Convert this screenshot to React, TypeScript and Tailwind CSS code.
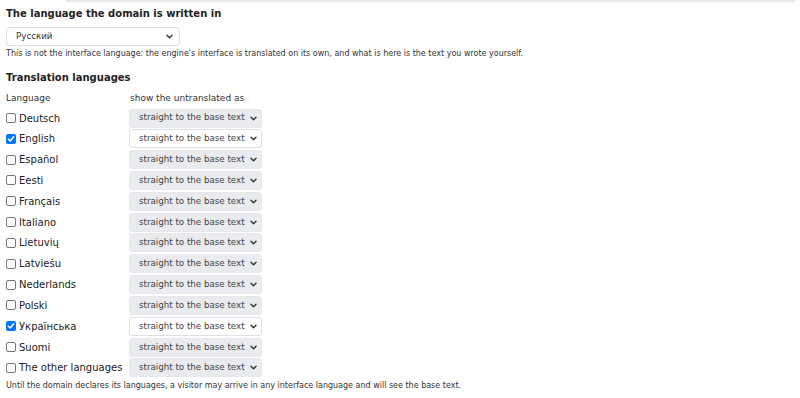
import React from "react";

const langs: { name: string; on: boolean }[] = [
  { name: "Deutsch", on: false },
  { name: "English", on: true },
  { name: "Español", on: false },
  { name: "Eesti", on: false },
  { name: "Français", on: false },
  { name: "Italiano", on: false },
  { name: "Lietuvių", on: false },
  { name: "Latviešu", on: false },
  { name: "Nederlands", on: false },
  { name: "Polski", on: false },
  { name: "Українська", on: true },
  { name: "Suomi", on: false },
  { name: "The other languages", on: false },
];

function Chevron() {
  return (
    <svg width="7" height="5" viewBox="0 0 7 5" className="shrink-0">
      <path d="M1 1.2 L3.5 3.7 L6 1.2" fill="none" stroke="#333" strokeWidth="1.4" strokeLinecap="round" strokeLinejoin="round" />
    </svg>
  );
}

function Box({ on }: { on: boolean }) {
  if (on) {
    return (
      <span className="w-[10px] h-[10px] rounded-[2px] bg-[#0075ff] flex items-center justify-center shrink-0">
        <svg width="8" height="8" viewBox="0 0 8 8">
          <path d="M1.4 4.2 L3.2 6 L6.7 1.8" fill="none" stroke="#fff" strokeWidth="1.5" strokeLinecap="round" strokeLinejoin="round" />
        </svg>
      </span>
    );
  }
  return <span className="w-[10px] h-[10px] rounded-[2px] border border-[#767676] bg-white shrink-0" />;
}

export default function App() {
  return (
    <div className="w-[800px] h-[398px] bg-white overflow-hidden text-[#222]" style={{ fontFamily: '"DejaVu Sans", Verdana, sans-serif' }}>
      <div className="h-[2px] ml-[66px] mr-[5px] bg-[#e8e9ee]" />
      <div className="pl-[6px]">
        <div className="mt-[5px] text-[10px] leading-[14px] font-bold text-[#222]">The language the domain is written in</div>
        <div className="mt-[6px] w-[174px] h-[19px] rounded-[3px] border border-[#dcdfe3] bg-white flex items-center justify-between pl-[9px] pr-[6px] text-[8.7px] text-[#333]">
          <span>Русский</span>
          <Chevron />
        </div>
        <div className="mt-[3px] text-[8px] leading-[10px] text-[#333]">
          This is not the interface language: the engine's interface is translated on its own, and what is here is the text you wrote yourself.
        </div>
        <div className="mt-[12px] text-[10px] leading-[14px] font-bold text-[#222]">Translation languages</div>
        <div className="mt-[7px] flex text-[9px] leading-[12px] text-[#333]">
          <span className="w-[124px]">Language</span>
          <span>show the untranslated as</span>
        </div>
        <div className="mt-[4.5px] flex flex-col gap-[1.83px]">
          {langs.map((l) => (
            <div key={l.name} className="flex items-center h-[19px]">
              <div className="w-[123px] flex items-center gap-[2px] text-[10px]">
                <Box on={l.on} />
                <span className="ml-[1px]">{l.name}</span>
              </div>
              <div
                className={
                  l.on
                    ? "w-[133px] h-[19px] rounded-[3px] border border-[#dcdfe3] bg-white flex items-center justify-between pl-[9px] pr-[4px] text-[8.7px] text-[#444]"
                    : "w-[133px] h-[19px] rounded-[3px] border border-[#e6e8eb] bg-[#e9ebee] flex items-center justify-between pl-[9px] pr-[4px] text-[8.7px] text-[#444]"
                }
              >
                <span>straight to the base text</span>
                <Chevron />
              </div>
            </div>
          ))}
        </div>
        <div className="mt-[3.5px] text-[8px] leading-[10px] text-[#333]">
          Until the domain declares its languages, a visitor may arrive in any interface language and will see the base text.
        </div>
      </div>
    </div>
  );
}
